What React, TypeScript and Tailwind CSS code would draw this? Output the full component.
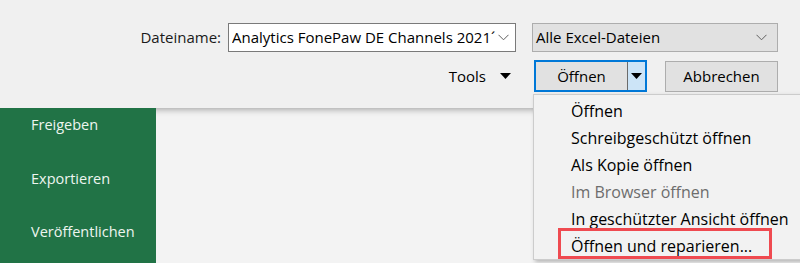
import React from 'react';

const font = { fontFamily: '"Open Sans", "Noto Sans", sans-serif' };

const Chevron: React.FC = () => (
  <svg width="11" height="7" viewBox="0 0 11 7" className="shrink-0">
    <path d="M0.5 0.8 L5.5 5.8 L10.5 0.8" fill="none" stroke="#5f5f5f" strokeWidth="1" />
  </svg>
);

const Triangle: React.FC = () => (
  <svg width="11" height="6" viewBox="0 0 11 6">
    <path d="M0 0 H11 L5.5 6 Z" fill="#000" />
  </svg>
);

const menuItems = [
  { label: 'Öffnen', disabled: false },
  { label: 'Schreibgeschützt öffnen', disabled: false },
  { label: 'Als Kopie öffnen', disabled: false },
  { label: 'Im Browser öffnen', disabled: true },
  { label: 'In geschützter Ansicht öffnen', disabled: false },
  { label: 'Öffnen und reparieren...', disabled: false },
];

const sideItems = ['Freigeben', 'Exportieren', 'Veröffentlichen'];

export default function App() {
  return (
    <div className="relative w-[800px] h-[263px] overflow-hidden bg-[#f3f3f3]" style={font}>
      {/* file dialog footer */}
      <div className="relative z-10 h-[108px] bg-[#f0f0f0] shadow-[0_2px_6px_rgba(0,0,0,0.3)] pt-[23px] pr-[22px]">
        <div className="flex items-center justify-end h-[29px]">
          <span className="text-[15px] text-[#1a1a1a] mr-[7px]">Dateiname:</span>
          <div className="w-[288px] h-[29px] bg-white border border-[#7a7a7a] flex items-center pl-[3px] pr-[6px]">
            <span className="flex-1 overflow-hidden whitespace-nowrap text-[15px] text-black">Analytics FonePaw DE Channels 2021´</span>
            <Chevron />
          </div>
          <div className="w-[246px] h-[29px] ml-[16px] bg-[#e1e1e1] border border-[#adadad] flex items-center pl-[3px] pr-[10px]">
            <span className="flex-1 text-[15px] text-black">Alle Excel-Dateien</span>
            <Chevron />
          </div>
        </div>
        <div className="flex items-center justify-end mt-[8px] h-[32px]">
          <span className="text-[15px] text-black">Tools</span>
          <span className="ml-[14px] mr-[23px] flex items-center"><Triangle /></span>
          <div className="w-[113px] h-[32px] border-2 border-[#0078d7] bg-[#e1e1e1] flex">
            <div className="flex-1 flex items-center justify-center text-[15px] text-black">Öffnen</div>
            <div className="w-[18px] bg-[#cce4f7] border-l border-[#6b6b6b] flex items-center justify-center"><Triangle /></div>
          </div>
          <div className="w-[113px] h-[31px] ml-[18px] bg-[#e1e1e1] border border-[#adadad] flex items-center justify-center text-[15px] text-black">Abbrechen</div>
        </div>
      </div>

      {/* backstage area */}
      <div className="flex h-[155px]">
        <div className="relative z-20 w-[156px] bg-[#217346] pt-[4px] flex flex-col gap-[27.5px]">
          {sideItems.map((s) => (
            <div key={s} className="h-[26px] flex items-center pl-[31px] text-[14.5px] text-[#eef5f0]">{s}</div>
          ))}
        </div>
        <div className="flex-1 bg-[#f3f3f3]" />
      </div>

      {/* dropdown menu */}
      <div className="absolute z-20 left-[533px] top-[94px] w-[290px] h-[166px] bg-[#f2f2f2] border border-[#cccccc] shadow-[2px_2px_4px_rgba(0,0,0,0.25)] pt-[2px]">
        {menuItems.map((m) => (
          <div key={m.label} className={`h-[27px] flex items-center pl-[37px] text-[16px] whitespace-nowrap ${m.disabled ? 'text-[#6d6d6d]' : 'text-black'}`}>
            {m.label}
          </div>
        ))}
      </div>

      {/* highlight box */}
      <div className="absolute z-30 left-[558px] top-[228px] w-[214px] h-[31px] border-[3px] border-[#ef4a50]" />
    </div>
  );
}
